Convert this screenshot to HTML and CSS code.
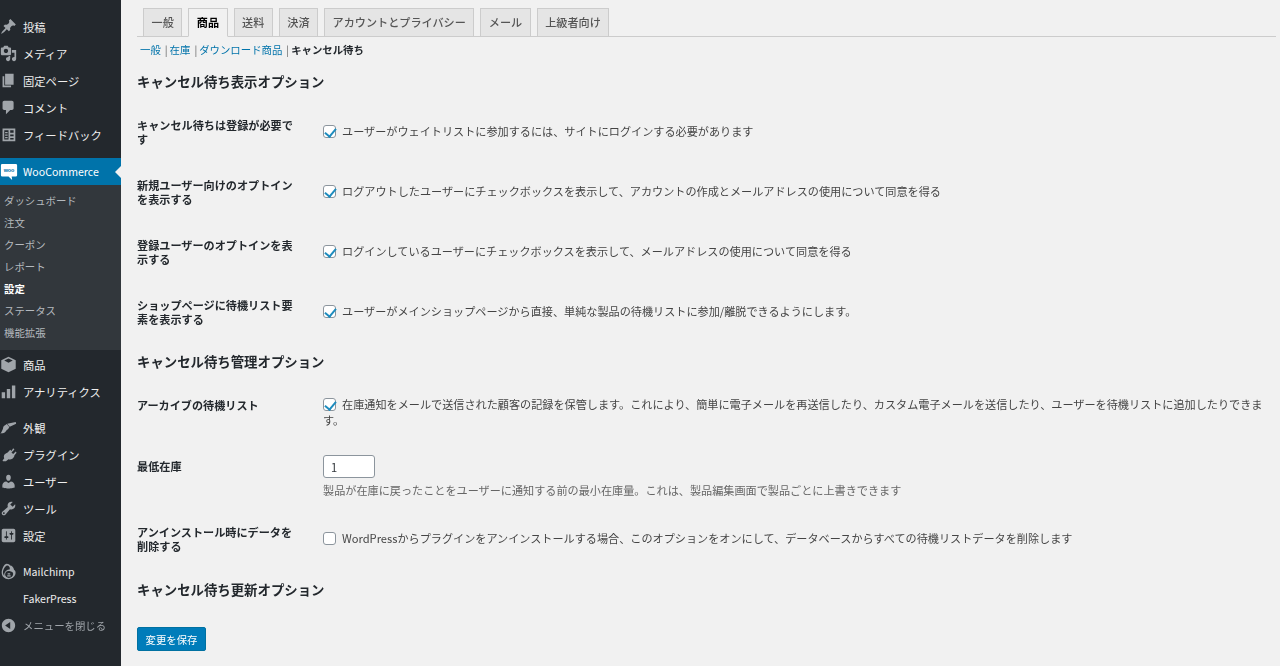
FILE: index.html
```html
<!DOCTYPE html>
<html lang="ja">
<head>
<meta charset="utf-8">
<title>設定</title>
<link rel="stylesheet" href="styles.css">
</head>
<body>
<div class="app">
<aside class="sidebar">
  <ul class="menu first">
    <li><svg viewBox="0 0 20 20"><path d="M10.440 3.020l1.820-1.820 6.360 6.350-1.830 1.820c-1.050-.68-2.480-.57-3.410.36l-.75.75c-.92.93-1.040 2.350-.35 3.410l-1.830 1.820-2.410-2.410-2.800 2.790c-.42.42-3.380 2.710-3.800 2.290s1.860-3.390 2.280-3.810l2.790-2.790L4.100 9.360l1.830-1.820c1.050.69 2.480.57 3.400-.36l.75-.75c.93-.92 1.050-2.350.36-3.410z"/></svg>投稿</li>
    <li><svg viewBox="0 0 20 20"><path fill-rule="evenodd" d="M13 11V4c0-.55-.45-1-1-1h-1.670L9 1H5L3.670 3H2c-.55 0-1 .45-1 1v7c0 .55.45 1 1 1h10c.55 0 1-.45 1-1zM7 4.500c1.380 0 2.500 1.120 2.500 2.500S8.380 9.500 7 9.500 4.500 8.380 4.500 7 5.620 4.500 7 4.500zM14 6h5v10.500c0 1.380-1.120 2.500-2.500 2.500S14 17.880 14 16.500s1.120-2.500 2.500-2.500c.17 0 .34.02.5.05V9h-3V6zm-4 8.050V13h2v3.500c0 1.380-1.120 2.500-2.500 2.500S7 17.880 7 16.500 8.120 14 9.500 14c.17 0 .34.02.5.05z"/></svg>メディア</li>
    <li><svg viewBox="0 0 20 20"><path d="M6 15V2h10v13H6zm-1 1h8v2H3V5h2v11z"/></svg>固定ページ</li>
    <li><svg viewBox="0 0 20 20"><path d="M5 2h9c1.100 0 2 .9 2 2v7c0 1.100-.9 2-2 2h-2l-5 5v-5H5c-1.100 0-2-.9-2-2V4c0-1.100.9-2 2-2z"/></svg>コメント</li>
    <li><svg viewBox="0 0 20 20"><path fill-rule="evenodd" d="M3 3h15v15H3zM5 5v11h5V5zM12 5v3h4V5zM12 10v2h4v-2zM12 14v2h4v-2zM6 7h3v1.500H6zM6 10h3v1.500H6zM6 13h3v1.500H6z"/></svg>フィードバック</li>
  </ul>
  <div class="woo-head">
    <svg class="woo-icon" viewBox="0 0 20 20"><path fill="#fff" d="M2.500 1h15A1.500 1.500 0 0 1 19 2.500v11a1.500 1.500 0 0 1-1.500 1.500H13l.5 4-4-4H2.500A1.500 1.500 0 0 1 1 13.500v-11A1.500 1.500 0 0 1 2.500 1z"/><text x="10" y="10" text-anchor="middle" class="woo-text">woo</text></svg>
    <span class="latin">WooCommerce</span>
  </div>
  <ul class="submenu">
    <li>ダッシュボード</li>
    <li>注文</li>
    <li>クーポン</li>
    <li>レポート</li>
    <li class="current">設定</li>
    <li>ステータス</li>
    <li>機能拡張</li>
  </ul>
  <ul class="menu">
    <li><svg viewBox="0 0 20 20"><path fill-rule="evenodd" d="M10 1l8.500 4v10L10 19l-8.500-4V5zM10 3L5 5.400 10 8l5-2.600z"/></svg>商品</li>
    <li><svg viewBox="0 0 20 20"><path d="M2 11h4v7H2zM8 7h4v11H8zM14 3h4v15h-4z"/></svg>アナリティクス</li>
  </ul>
  <ul class="menu group">
    <li><svg viewBox="0 0 20 20"><path d="M18.500 3.500l.5 2-7.500 3.500-3-3.500zM8 6l3 3.500-1.500 2.500c-2 .5-2.500 3-4 4-1.500.8-3 1-5 1 1.500-1.500 2-3.500 3-5.500C3.500 10 4 8 5.500 7.500z"/></svg>外観</li>
    <li><svg viewBox="0 0 20 20"><path d="M15.500 2.500l1.500 1.500-3.500 3.500 2 2 3-3 1 1.500-2.500 3c0 1.500-1 3-2.500 4-1.500.9-3 1-4.500.5L7 18H3.500l-.5-1 2-2.500c-.7-1.500-.7-3 .3-4.500.8-1 2.200-2 3.700-2.500l3-3 1.500 1.500z"/></svg>プラグイン</li>
    <li><svg viewBox="0 0 20 20"><path d="M10 9.250c-2.270 0-2.730-3.440-2.730-3.440C7 4.020 7.820 2 9.970 2c2.160 0 2.980 2.020 2.710 3.810 0 0-.41 3.440-2.680 3.440zm0 2.570L12.720 10c2.390 0 4.520 2.330 4.520 4.530v2.490s-3.650 1.130-7.240 1.130c-3.650 0-7.240-1.130-7.240-1.130v-2.490c0-2.250 1.940-4.530 4.640-4.530z"/></svg>ユーザー</li>
    <li><svg viewBox="0 0 20 20"><path fill-rule="evenodd" d="M16.680 9.770c-1.340 1.340-3.300 1.670-4.950.99l-5.410 6.520c-.99.99-2.590.99-3.580 0s-.99-2.590 0-3.570l6.520-5.420c-.68-1.650-.35-3.610.99-4.950 1.280-1.280 3.120-1.620 4.720-1.060l-2.890 2.890 2.820 2.820 2.860-2.870c.53 1.580.18 3.390-1.080 4.650zM3.810 16.210c.4.390 1.040.39 1.430 0 .4-.4.4-1.040 0-1.430-.39-.4-1.030-.4-1.430 0-.39.39-.39 1.030 0 1.430z"/></svg>ツール</li>
    <li><svg viewBox="0 0 20 20"><path fill-rule="evenodd" d="M18 16V4c0-1.100-.9-2-2-2H4c-1.100 0-2 .9-2 2v12c0 1.100.9 2 2 2h12c1.100 0 2-.9 2-2zM8 11h1c.55 0 1 .45 1 1s-.45 1-1 1H8v1.500c0 .28-.22.5-.5.5s-.5-.22-.5-.5V13H6c-.55 0-1-.45-1-1s.45-1 1-1h1V5.500c0-.28.22-.5.5-.5s.5.22.5.5V11zm5-2h-1c-.55 0-1-.45-1-1s.45-1 1-1h1V5.500c0-.28.22-.5.5-.5s.5.22.5.5V7h1c.55 0 1 .45 1 1s-.45 1-1 1h-1v5.500c0 .28-.22.5-.5.5s-.5-.22-.5-.5V9z"/></svg>設定</li>
  </ul>
  <ul class="menu group">
    <li><svg viewBox="0 0 20 20"><path fill-rule="evenodd" d="M8 1c2 0 3 1 4 2 2 0 4 2 4.500 5 1.500 1 2.500 3 1.500 5.500-1 3-4 5.500-8 5.500-4.500 0-8-3-8-7.500C2 7 5 1 8 1zM8 3C6 4 3.500 8 3.500 11c0 1.500.5 3 1.500 4-.5-3 1.500-6 4-7 1-.5 2 0 2.500-1 .5-2-1.500-4.500-3.500-4zM10 9.500c-2.500 0-4 2-4 4s2 4 4.500 4 5-2 5-4.500-3-3.500-5.500-3.500zM9 12h3v1.500H9zM8.500 14.500h4V16h-4z"/></svg><span class="latin">Mailchimp</span></li>
    <li><span class="spacer"></span><span class="latin">FakerPress</span></li>
    <li class="collapse"><svg viewBox="0 0 20 20"><path fill-rule="evenodd" d="M10 2.160c4.330 0 7.840 3.510 7.840 7.840s-3.510 7.840-7.840 7.840S2.160 14.330 2.160 10 5.670 2.160 10 2.160zm2 11.840V6l-6 4z"/></svg>メニューを閉じる</li>
  </ul>
</aside>
<main class="content">
  <nav class="tabs">
    <a class="tab">一般</a>
    <a class="tab active">商品</a>
    <a class="tab">送料</a>
    <a class="tab">決済</a>
    <a class="tab">アカウントとプライバシー</a>
    <a class="tab">メール</a>
    <a class="tab">上級者向け</a>
  </nav>
  <div class="subsub">
    <a>一般</a><span class="sep">|</span><a>在庫</a><span class="sep">|</span><a>ダウンロード商品</a><span class="sep">|</span><b>キャンセル待ち</b>
  </div>
  <h2 class="h-first">キャンセル待ち表示オプション</h2>
  <div class="rows">
    <div class="row"><div class="label">キャンセル待ちは登録が必要です</div><label class="field"><input type="checkbox" checked>ユーザーがウェイトリストに参加するには、サイトにログインする必要があります</label></div>
    <div class="row"><div class="label">新規ユーザー向けのオプトインを表示する</div><label class="field"><input type="checkbox" checked>ログアウトしたユーザーにチェックボックスを表示して、アカウントの作成とメールアドレスの使用について同意を得る</label></div>
    <div class="row"><div class="label">登録ユーザーのオプトインを表示する</div><label class="field"><input type="checkbox" checked>ログインしているユーザーにチェックボックスを表示して、メールアドレスの使用について同意を得る</label></div>
    <div class="row"><div class="label">ショップページに待機リスト要素を表示する</div><label class="field"><input type="checkbox" checked>ユーザーがメインショップページから直接、単純な製品の待機リストに参加/離脱できるようにします。</label></div>
  </div>
  <h2 class="h-second">キャンセル待ち管理オプション</h2>
  <div class="rows">
    <div class="row top"><div class="label">アーカイブの待機リスト</div><label class="field wrap"><input type="checkbox" checked>在庫通知をメールで送信された顧客の記録を保管します。これにより、簡単に電子メールを再送信したり、カスタム電子メールを送信したり、ユーザーを待機リストに追加したりできます。</label></div>
    <div class="row stock"><div class="label">最低在庫</div><div class="field block"><input class="num" type="text" value="1"><p class="desc">製品が在庫に戻ったことをユーザーに通知する前の最小在庫量。これは、製品編集画面で製品ごとに上書きできます</p></div></div>
    <div class="row last"><div class="label">アンインストール時にデータを削除する</div><label class="field"><input type="checkbox">WordPressからプラグインをアンインストールする場合、このオプションをオンにして、データベースからすべての待機リストデータを削除します</label></div>
  </div>
  <h2 class="h-third">キャンセル待ち更新オプション</h2>
  <button class="save" type="button">変更を保存</button>
</main>
</div>
</body>
</html>
```

FILE: styles.css
```css
* { box-sizing: border-box; }
html, body { margin: 0; height: 100%; }
body {
  font-family: "Noto Sans CJK JP", "Noto Sans", sans-serif;
  font-size: 11.13px;
  color: #444;
  background: #f1f1f1;
  overflow: hidden;
}
.app { display: flex; height: 666px; filter: blur(0.35px); }
.sidebar {
  width: 121px;
  flex: none;
  background: #23282d;
  color: #eee;
  padding-top: 13px;
  font-size: 11.3px;
}
ul { list-style: none; margin: 0; padding: 0; }
.menu li {
  display: flex;
  align-items: center;
  height: 27px;
  white-space: nowrap;
}
.menu svg {
  width: 17px;
  height: 17px;
  margin: 0 6px 0 0;
  fill: #a0a5aa;
  flex: none;
}
.latin { font-size: 10.6px; }
.spacer { width: 23px; flex: none; }
.group { margin-top: 9px; }
.collapse { color: #a0a5aa; font-size: 10.4px; }
.woo-head {
  display: flex;
  align-items: center;
  height: 27px;
  margin-top: 10px;
  background: #0073aa;
  color: #fff;
  position: relative;
  white-space: nowrap;
}
.woo-head::after {
  content: "";
  position: absolute;
  right: 0;
  top: 8px;
  border: 6px solid transparent;
  border-right-color: #f1f1f1;
  border-left-width: 0;
}
.woo-icon { width: 18px; height: 18px; margin-right: 5px; flex: none; }
.woo-text { font-family: "Liberation Sans", sans-serif; font-size: 6px; font-weight: 700; fill: #0073aa; }
.submenu {
  background: #32373c;
  padding: 5px 0 6px;
  margin-bottom: 1px;
  color: #b4b9be;
  font-size: 10.4px;
}
.submenu li { height: 22px; line-height: 22px; padding-left: 4px; }
.submenu .current { color: #fff; font-weight: 700; }
.content { flex: 1; min-width: 0; padding: 8px 4px 0 16px; }
.tabs {
  display: flex;
  gap: 6px;
  padding-left: 6px;
  height: 29px;
  border-bottom: 1px solid #ccc;
}
.tab {
  height: 29px;
  padding: 0 7.5px;
  line-height: 27px;
  background: #e5e5e5;
  border: 1px solid #ccc;
  color: #555;
  font-weight: 500;
}
.tab.active {
  background: #f1f1f1;
  border-bottom-color: #f1f1f1;
  color: #000;
  font-weight: 700;
}
.subsub { margin: 5px 0 0 3px; height: 16px; line-height: 16px; white-space: nowrap; font-size: 10.4px; }
.subsub a { color: #0073aa; }
.subsub b { color: #23282d; }
.sep { color: #666; margin: 0 2px 0 4px; }
h2 {
  margin: 0;
  font-size: 13.4px;
  line-height: 20px;
  font-weight: 700;
  color: #23282d;
}
.h-first { margin-top: 13px; }
.h-second { margin-top: 10px; }
.h-third { margin-top: 18px; }
.rows { display: flex; flex-direction: column; }
.h-first + .rows { margin-top: 10px; }
.h-second + .rows { margin-top: 13px; }
.row {
  display: flex;
  align-items: center;
  height: 60px;
}
.label {
  width: 186px;
  flex: none;
  padding: 1px 26px 0 0;
  line-height: 14px;
  font-weight: 700;
  color: #23282d;
}
.field { display: block; flex: 1; min-width: 0; line-height: 16px; }
.row.top { align-items: flex-start; height: 56px; padding-top: 12px; }
.row.top .label { padding-top: 2px; }
.row.stock { align-items: flex-start; height: 75px; padding-top: 15px; }
.row.stock .label { padding-top: 4px; }
.row.last { height: 46px; }
input[type="checkbox"] {
  appearance: none;
  display: inline-block;
  position: relative;
  width: 13px;
  height: 13px;
  margin: 0 6px 0 0;
  vertical-align: -2px;
  background: #fff;
  border: 1px solid #8c959d;
  border-radius: 3px;
}
input[type="checkbox"]:checked::before {
  content: "";
  position: absolute;
  left: 3px;
  top: 0;
  width: 5px;
  height: 9px;
  border: solid #1e8cbe;
  border-width: 0 2px 2px 0;
  transform: rotate(40deg);
}
.num {
  display: block;
  width: 52px;
  height: 23px;
  padding: 0 7px;
  font: inherit;
  color: #32373c;
  background: #fff;
  border: 1px solid #8c959d;
  border-radius: 3px;
}
.desc { margin: 4px 0 0; line-height: 16px; color: #666; }
.save {
  display: block;
  margin-top: 28px;
  width: 69px;
  height: 24px;
  padding: 0;
  font: inherit;
  font-size: 10.4px;
  color: #fff;
  background: #007cba;
  border: 1px solid #0071a1;
  border-radius: 2px;
}
```
